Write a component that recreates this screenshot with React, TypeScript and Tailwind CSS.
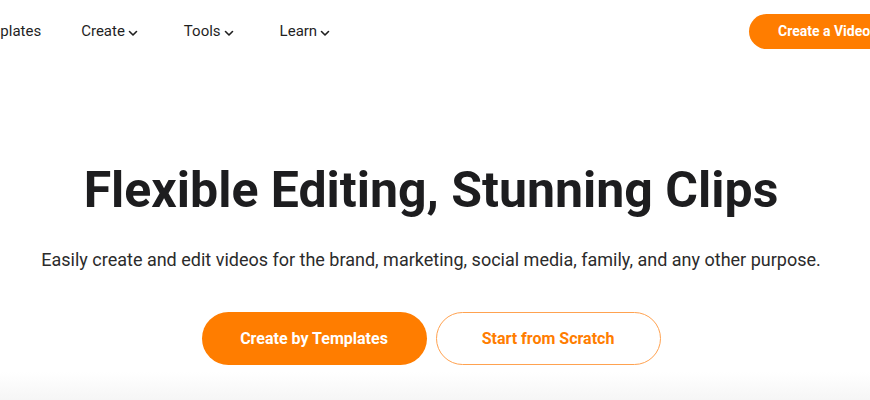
import React from "react";

function Chevron() {
  return (
    <svg width="10" height="10" viewBox="0 0 10 10" className="ml-[3px] mt-[3px]" fill="none">
      <path d="M1.5 3.5 L5 7 L8.5 3.5" stroke="#1f1f1f" strokeWidth="1.6" strokeLinecap="round" strokeLinejoin="round" />
    </svg>
  );
}

function NavItem({ label, dropdown, className = "" }: { label: string; dropdown?: boolean; className?: string }) {
  return (
    <div className={`flex items-center text-[15px] text-[#1f1f1f] ${className}`}>
      <span>{label}</span>
      {dropdown && <Chevron />}
    </div>
  );
}

export default function App() {
  return (
    <div
      className="w-[870px] h-[400px] overflow-hidden bg-white relative"
      style={{ fontFamily: "Roboto, 'Noto Sans', sans-serif" }}
    >
      <header className="h-[62px] flex items-center justify-between">
        <nav className="flex items-center -ml-[29px]">
          <NavItem label="Templates" />
          <NavItem label="Create" dropdown className="ml-[40px]" />
          <NavItem label="Tools" dropdown className="ml-[46px]" />
          <NavItem label="Learn" dropdown className="ml-[46px]" />
        </nav>
        <button className="h-[35px] w-[160px] -mr-[39px] rounded-full bg-[#ff7d00] text-white text-[14px] font-bold pl-[29px] text-left">
          Create a Video
        </button>
      </header>

      <main className="flex flex-col items-center pt-[98px] pr-[8px]">
        <h1 className="text-[50px] leading-[60px] font-bold text-[#1d1d1f]">
          Flexible Editing, Stunning Clips
        </h1>
        <p className="mt-[28px] text-[18px] leading-[24px] text-[#2b2b2b]">
          Easily create and edit videos for the brand, marketing, social media, family, and any other purpose.
        </p>
        <div className="mt-[40px] flex gap-[9px]">
          <button className="w-[225px] h-[53px] rounded-full bg-[#ff7d00] text-white text-[16px] font-bold">
            Create by Templates
          </button>
          <button className="w-[225px] h-[53px] rounded-full border border-[#ffa250] bg-white text-[#ff7d00] text-[16px] font-bold">
            Start from Scratch
          </button>
        </div>
      </main>

      <div className="absolute left-0 right-0 bottom-0 h-[28px] bg-gradient-to-b from-white to-[#f6f6f6]" />
    </div>
  );
}
